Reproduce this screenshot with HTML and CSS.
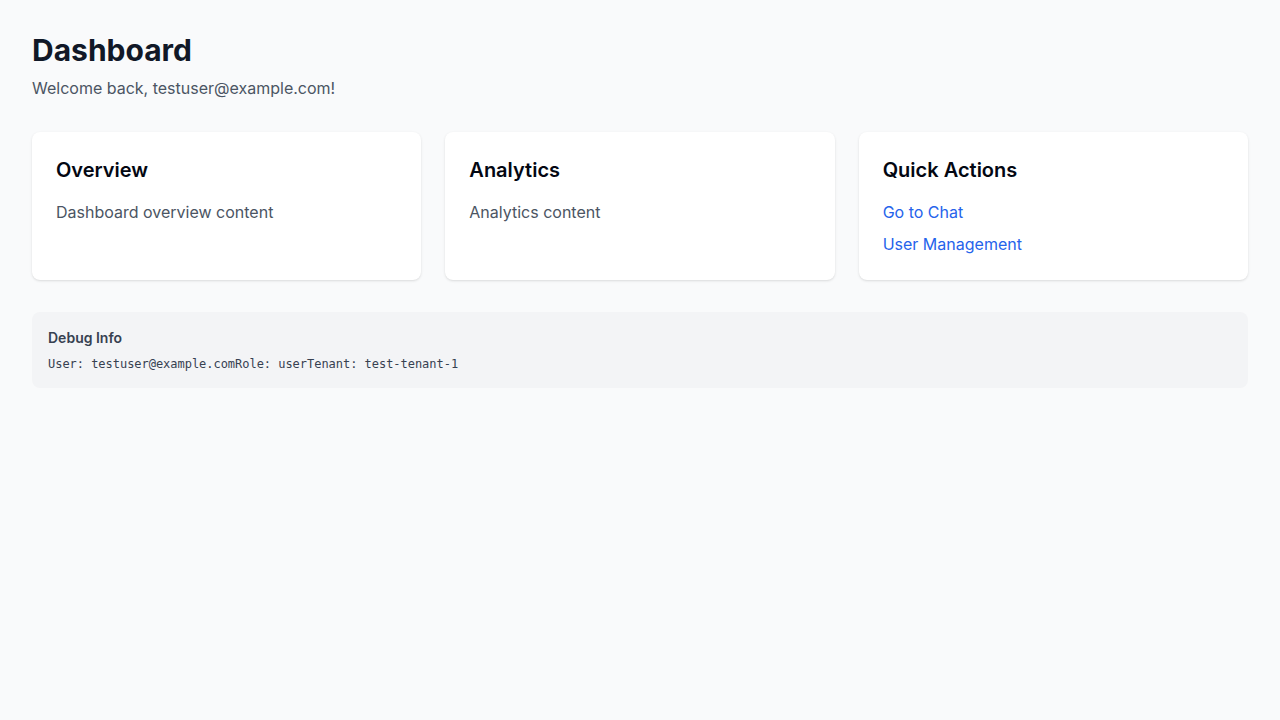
FILE: index.html
```html
<!DOCTYPE html>
<html lang="en">
<head>
<meta charset="utf-8">
<title>Dashboard</title>
<link rel="stylesheet" href="styles.css">
</head>
<body>
<main class="page">
  <h1 class="title">Dashboard</h1>
  <p class="subtitle">Welcome back, testuser@example.com!</p>
  <section class="cards">
    <div class="card">
      <h2 class="card-title">Overview</h2>
      <p class="card-text">Dashboard overview content</p>
    </div>
    <div class="card">
      <h2 class="card-title">Analytics</h2>
      <p class="card-text">Analytics content</p>
    </div>
    <div class="card">
      <h2 class="card-title">Quick Actions</h2>
      <div class="actions">
        <a class="link" href="#">Go to Chat</a>
        <a class="link" href="#">User Management</a>
      </div>
    </div>
  </section>
  <section class="debug">
    <h3 class="debug-title">Debug Info</h3>
    <pre class="debug-pre">User: testuser@example.comRole: userTenant: test-tenant-1</pre>
  </section>
</main>
</body>
</html>
```
FILE: styles.css
```css
* { box-sizing: border-box; }
html, body { margin: 0; padding: 0; }
body {
  background: #f9fafb;
  font-family: Inter, "Noto Sans", sans-serif;
  color: #111827;
  min-height: 100vh;
}
.page { padding: 32px; }
.title {
  margin: 0;
  font-size: 30px;
  line-height: 36px;
  font-weight: 700;
  color: #111827;
}
.subtitle {
  margin: 8px 0 0;
  font-size: 16px;
  line-height: 24px;
  color: #4b5563;
}
.cards {
  margin-top: 32px;
  display: grid;
  grid-template-columns: repeat(3, 1fr);
  gap: 24px;
}
.card {
  background: #fff;
  border-radius: 8px;
  padding: 24px;
  box-shadow: 0 1px 3px rgba(0,0,0,0.1), 0 1px 2px -1px rgba(0,0,0,0.1);
}
.card-title {
  margin: 0 0 16px;
  font-size: 20px;
  line-height: 28px;
  font-weight: 600;
  color: #030712;
}
.card-text {
  margin: 0;
  font-size: 16px;
  line-height: 24px;
  color: #4b5563;
}
.actions {
  display: flex;
  flex-direction: column;
  align-items: flex-start;
  gap: 8px;
}
.link {
  font-size: 16px;
  line-height: 24px;
  color: #2563eb;
  text-decoration: none;
}
.debug {
  margin-top: 32px;
  background: #f3f4f6;
  border-radius: 8px;
  padding: 16px;
}
.debug-title {
  margin: 0;
  font-size: 14px;
  line-height: 20px;
  font-weight: 600;
  color: #374151;
}
.debug-pre {
  margin: 8px 0 0;
  font-family: "DejaVu Sans Mono", "Liberation Mono", monospace;
  font-size: 12px;
  line-height: 16px;
  letter-spacing: -0.03px;
  color: #374151;
}
```
